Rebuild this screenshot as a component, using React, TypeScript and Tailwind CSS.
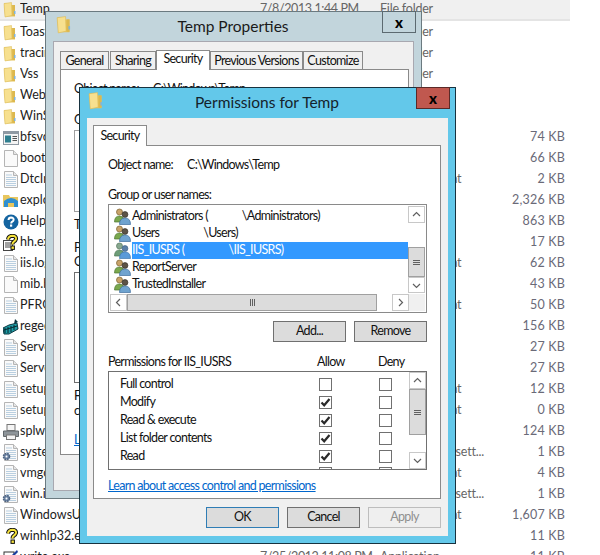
import React from 'react';

const FONT = "font-['Lato','Noto_Sans',sans-serif]";

type IconKind = 'folder' | 'exe' | 'blank' | 'text' | 'explorer' | 'help' | 'hh' | 'reg' | 'printer' | 'gear' | 'hlp' | 'write';

const FILES: { name: string; icon: IconKind; date?: string; type?: string; size?: string }[] = [
  { name: 'Temp', icon: 'folder', date: '7/8/2013 1:44 PM', type: 'File folder' },
  { name: 'Toast', icon: 'folder', type: 'File folder' },
  { name: 'tracing', icon: 'folder', type: 'File folder' },
  { name: 'Vss', icon: 'folder', type: 'File folder' },
  { name: 'Web', icon: 'folder' },
  { name: 'WinSxS', icon: 'folder' },
  { name: 'bfsvc.exe', icon: 'exe', size: '74 KB' },
  { name: 'bootstat', icon: 'blank', size: '66 KB' },
  { name: 'DtcInstall', icon: 'text', type: 'Text Document', size: '2 KB' },
  { name: 'explorer', icon: 'explorer', size: '2,326 KB' },
  { name: 'HelpPane', icon: 'help', size: '863 KB' },
  { name: 'hh.exe', icon: 'hh', size: '17 KB' },
  { name: 'iis.log', icon: 'text', type: 'Text Document', size: '62 KB' },
  { name: 'mib.bin', icon: 'blank', size: '43 KB' },
  { name: 'PFRO.log', icon: 'text', type: 'Text Document', size: '50 KB' },
  { name: 'regedit', icon: 'reg', size: '156 KB' },
  { name: 'ServerA', icon: 'text', size: '27 KB' },
  { name: 'ServerB', icon: 'text', size: '27 KB' },
  { name: 'setupact', icon: 'text', type: 'Text Document', size: '12 KB' },
  { name: 'setuperr', icon: 'text', type: 'Text Document', size: '0 KB' },
  { name: 'splwow64', icon: 'printer', size: '124 KB' },
  { name: 'system.ini', icon: 'gear', type: 'Configuration sett...', size: '1 KB' },
  { name: 'vmgcoinst', icon: 'text', type: 'Text Document', size: '4 KB' },
  { name: 'win.ini', icon: 'gear', type: 'Configuration sett...', size: '1 KB' },
  { name: 'WindowsUpdate', icon: 'text', type: 'Text Document', size: '1,607 KB' },
  { name: 'winhlp32.exe', icon: 'hlp', size: '11 KB' },
  { name: 'write.exe', icon: 'write', date: '7/25/2012 11:08 PM', type: 'Application', size: '11 KB' },
];

function FolderIcon({ size = 16 }: { size?: number }) {
  return (
    <svg width={size} height={size} viewBox="0 0 16 16">
      <path d="M1 1.5 L6 1 L6.5 3 L12 3 L12 14.5 L2 14.5 Z" fill="#e6c35c" />
      <path d="M1 1.5 L8.5 0.5 L9 13.5 L2 15 Z" fill="#f7e08f" stroke="#d9b64e" strokeWidth="0.5" />
      <rect x="9.5" y="3" width="2.5" height="11" fill="#dcb84f" />
      <rect x="11" y="9" width="1.5" height="3" fill="#7fb4dc" />
    </svg>
  );
}

function FileIcon({ lines }: { lines?: boolean }) {
  return (
    <svg width="16" height="17" viewBox="0 0 16 17">
      <path d="M1.5 0.5 H10.5 L14.5 4.5 V16.5 H1.5 Z" fill="#fafafa" stroke="#b5b5b5" />
      <path d="M10.5 0.5 V4.5 H14.5" fill="#e6e6e6" stroke="#b5b5b5" />
      {lines && (
        <path d="M3 4 H9 M3 6.5 H13 M3 8.5 H13 M3 10.5 H13 M3 12.5 H13 M3 14.5 H13" stroke="#b9cfe0" strokeWidth="1" />
      )}
    </svg>
  );
}

function ListIcon({ kind }: { kind: IconKind }) {
  switch (kind) {
    case 'folder':
      return <FolderIcon />;
    case 'text':
      return <FileIcon lines />;
    case 'blank':
      return <FileIcon />;
    case 'exe':
      return (
        <svg width="16" height="14" viewBox="0 0 16 14">
          <rect x="0.5" y="0.5" width="15" height="13" fill="#f4f4f4" stroke="#8f99a3" />
          <rect x="1" y="1" width="14" height="2" fill="#8f99a3" />
          <rect x="2" y="4.5" width="6" height="7" fill="#2f7f8f" />
          <path d="M9.5 5.5 H14 M9.5 7.5 H14 M9.5 9.5 H14" stroke="#555" />
        </svg>
      );
    case 'explorer':
      return (
        <svg width="16" height="16" viewBox="0 0 16 16">
          <path d="M0 2 H6 L7 4 H15 V14 H0 Z" fill="#e8c65e" />
          <path d="M1 8 Q8 2 15 8 V14 H11 V10 H5 V14 H1 Z" fill="#2f8fd0" />
        </svg>
      );
    case 'help':
      return (
        <svg width="16" height="16" viewBox="0 0 16 16">
          <circle cx="8" cy="8" r="7.5" fill="#1464a0" />
          <path d="M5.5 6 Q5.7 3.5 8 3.5 Q10.7 3.6 10.6 5.8 Q10.5 7 9 7.8 Q8.2 8.4 8.2 9.5" fill="none" stroke="#fff" strokeWidth="2" />
          <rect x="7" y="10.5" width="2.2" height="2.2" fill="#fff" />
        </svg>
      );
    case 'hh':
    case 'hlp':
      return (
        <svg width="16" height="17" viewBox="0 0 16 17">
          {kind === 'hh' && <rect x="0.5" y="6.5" width="9" height="10" fill="#fff" stroke="#444" />}
          {kind === 'hh' && <path d="M2 9 H8 M2 11 H8 M2 13 H8" stroke="#444" />}
          <path d="M5 5.5 Q5.5 1.8 9.5 1.8 Q13.5 2 13 5 Q12.5 7 10.5 8 Q9.5 8.7 9.5 10.5" fill="none" stroke="#111" strokeWidth="4" />
          <path d="M5 5.5 Q5.5 1.8 9.5 1.8 Q13.5 2 13 5 Q12.5 7 10.5 8 Q9.5 8.7 9.5 10.5" fill="none" stroke="#f5e23c" strokeWidth="2" />
          <rect x="8" y="12" width="3.4" height="3.4" fill="#f5e23c" stroke="#111" />
        </svg>
      );
    case 'reg':
      return (
        <svg width="16" height="16" viewBox="0 0 16 16">
          <path d="M0 9 L6 6 L14 4 L15 10 L6 15 L1 15 Z" fill="#1f9da6" stroke="#0b3640" />
          <path d="M2 9 V14 M5 8 V14 M8 7 V13 M11 6 V11 M1 11 L14 7" stroke="#06262e" />
          <path d="M12 0 L15 3 L11 5 Z" fill="#0b3640" />
        </svg>
      );
    case 'printer':
      return (
        <svg width="16" height="16" viewBox="0 0 16 16">
          <rect x="4" y="0.5" width="8" height="6" fill="#f4f4f4" stroke="#777" />
          <path d="M0.5 7 H15.5 V12.5 H0.5 Z" fill="#8e959a" stroke="#62686c" />
          <rect x="3.5" y="11" width="9" height="4.5" fill="#f4f4f4" stroke="#777" />
        </svg>
      );
    case 'gear':
      return (
        <span className="relative block w-4 h-[17px]">
          <FileIcon lines />
          <svg className="absolute left-[-1px] bottom-0" width="9" height="9" viewBox="0 0 9 9">
            <circle cx="4.5" cy="4.5" r="3" fill="#7088a8" stroke="#4e6380" strokeWidth="1.6" strokeDasharray="1.6 0.8" />
            <circle cx="4.5" cy="4.5" r="1" fill="#fff" />
          </svg>
        </span>
      );
    case 'write':
      return (
        <svg width="16" height="16" viewBox="0 0 16 16">
          <rect x="1" y="2" width="10" height="14" fill="#fff" stroke="#333" />
          <path d="M8 6 L14 0 L15 2 L10 7 Z" fill="#1b3fa0" />
        </svg>
      );
  }
}

function FileRow({ file, selected }: { file: (typeof FILES)[number]; selected: boolean }) {
  return (
    <div className={`h-[21px] w-[570px] shrink-0 flex items-center text-[12.5px] ${selected ? 'h-[20px] mb-[1px] bg-[#f0f0f0] border-b-2 border-[#e4e4e4]' : ''}`}>
      <span className="w-[20px] pl-[1px] flex justify-center shrink-0">
        <ListIcon kind={file.icon} />
      </span>
      <span className="w-[240px] text-[#1c1c1c] truncate">{file.name}</span>
      <span className="w-[120px] text-[#666] whitespace-nowrap tracking-[-0.4px]">{file.date ?? ''}</span>
      <span className="w-[125px] text-[#666] whitespace-nowrap tracking-[-0.2px]">{file.type ?? ''}</span>
      <span className="w-[60px] text-right text-[#6a6a78] tracking-[0.2px]">{file.size ?? ''}</span>
    </div>
  );
}

function UsersIcon({ muted }: { muted?: boolean }) {
  return (
    <svg width="17" height="17" viewBox="0 0 17 17" className="shrink-0">
      <circle cx="5.5" cy="4" r="3" fill={muted ? '#88a890' : '#c9a36a'} stroke={muted ? '#57785f' : '#7a6230'} strokeWidth="0.7" />
      <path d="M0.5 14 Q0.5 8 5.5 8 Q9.5 8 10 12 V14 Z" fill={muted ? '#6d9d78' : '#7aa84e'} stroke={muted ? '#507a58' : '#4d7530'} strokeWidth="0.7" />
      <circle cx="11" cy="6.5" r="2.9" fill={muted ? '#5a7fa8' : '#5c5346'} stroke={muted ? '#41648a' : '#3a342b'} strokeWidth="0.7" />
      <path d="M5.5 16.5 Q5.5 10 11 10 Q16.5 10 16.5 16.5 Z" fill={muted ? '#5a9ad8' : '#6fa3cf'} stroke={muted ? '#3f78b0' : '#3f6f9d'} strokeWidth="0.7" />
    </svg>
  );
}

function Chevron({ dir }: { dir: 'up' | 'down' | 'left' | 'right' }) {
  const d = {
    up: 'M2 7 L5.5 3.5 L9 7',
    down: 'M2 4 L5.5 7.5 L9 4',
    left: 'M7 2 L3.5 5.5 L7 9',
    right: 'M4 2 L7.5 5.5 L4 9',
  }[dir];
  return (
    <svg width="11" height="11" viewBox="0 0 11 11">
      <path d={d} fill="none" stroke="#606060" strokeWidth="1.2" />
    </svg>
  );
}

function ScrollButton({ dir, className = '' }: { dir: 'up' | 'down' | 'left' | 'right'; className?: string }) {
  return (
    <div className={`bg-white border border-[#c8c8c8] flex items-center justify-center shrink-0 ${className}`}>
      <Chevron dir={dir} />
    </div>
  );
}

function Grip({ vertical }: { vertical?: boolean }) {
  return vertical ? (
    <div className="flex flex-col gap-[1px]">
      <div className="w-[7px] h-[1px] bg-[#606060]" />
      <div className="w-[7px] h-[1px] bg-[#606060]" />
      <div className="w-[7px] h-[1px] bg-[#606060]" />
    </div>
  ) : (
    <div className="flex gap-[1px]">
      <div className="h-[7px] w-[1px] bg-[#606060]" />
      <div className="h-[7px] w-[1px] bg-[#606060]" />
      <div className="h-[7px] w-[1px] bg-[#606060]" />
    </div>
  );
}

function Win8Button({ label, disabled, primary, className = '' }: { label: string; disabled?: boolean; primary?: boolean; className?: string }) {
  const tone = disabled
    ? 'bg-[#efefef] border-[#bdbdbd] text-[#8f8f8f]'
    : primary
      ? 'bg-[#dcdcdc] border-[#2f7db5] text-[#111]'
      : 'bg-[#dcdcdc] border-[#707070] text-[#111]';
  return (
    <div className={`h-[21px] w-[73px] border flex items-center justify-center pb-[1px] ${tone} ${className}`}>
      {label}
    </div>
  );
}

function Check({ on }: { on?: boolean }) {
  return (
    <div className="w-[13px] h-[13px] border border-[#707070] bg-white flex items-center justify-center">
      {on && (
        <svg width="11" height="11" viewBox="0 0 11 11">
          <path d="M1.5 5.5 L4.2 8.3 L9.5 2" fill="none" stroke="#2a2a2a" strokeWidth="2.2" />
        </svg>
      )}
    </div>
  );
}

const USERS = [
  { label: <>Administrators (<span className="inline-block w-[34px]" />\Administrators)</> },
  { label: <>Users<span className="inline-block w-[44px]" />\Users)</> },
  { label: <>IIS_IUSRS (<span className="inline-block w-[44px]" />\IIS_IUSRS)</>, selected: true },
  { label: <>ReportServer</> },
  { label: <>TrustedInstaller</> },
];

const PERMISSIONS = [
  { name: 'Full control', allow: false },
  { name: 'Modify', allow: true },
  { name: 'Read & execute', allow: true },
  { name: 'List folder contents', allow: true },
  { name: 'Read', allow: true },
];

function TempProperties() {
  return (
    <div className="absolute left-[45px] top-[11px] w-[377px] h-[488px] bg-[#c2d5dc] border border-[#6b7a80] flex flex-col">
      <div className="h-[29px] shrink-0 relative flex items-center justify-center text-[15.5px] text-[#1a1a1a]">
        <span className="absolute left-[10px] top-[4px]"><FolderIcon size={18} /></span>
        <span className="ml-[-1px]">Temp Properties</span>
        <div className="absolute right-[5px] top-[-1px] w-[34px] h-[22px] border border-[#5c6a70] flex items-center justify-center text-[15px] font-black leading-none text-black">x</div>
      </div>
      <div className="mx-[7px] flex-1 mb-[7px] bg-[#f0f0f0] border border-[#a8a8b0] px-[6px] pt-[8px] flex flex-col text-[12.5px] tracking-[-0.7px]">
        <div className="flex items-end h-[19px] text-[#111] whitespace-nowrap">
          <div className="h-[18px] w-[49px] pt-[1px] bg-[#f0f0f0] border border-b-0 border-[#8a8a8a] flex items-center justify-center">General</div>
          <div className="h-[18px] w-[46px] pt-[1px] ml-[1px] bg-[#f0f0f0] border border-b-0 border-[#8a8a8a] flex items-center justify-center">Sharing</div>
          <div className="h-[20px] w-[54px] bg-white border border-b-0 border-[#8a8a8a] flex items-center justify-center pb-[2px] relative z-10 mb-[-1px]">Security</div>
          <div className="h-[18px] w-[93px] pt-[1px] bg-[#f0f0f0] border border-b-0 border-[#8a8a8a] flex items-center justify-center">Previous Versions</div>
          <div className="h-[18px] w-[60px] pt-[1px] bg-[#f0f0f0] border border-b-0 border-[#8a8a8a] flex items-center justify-center">Customize</div>
        </div>
        <div className="w-[349px] h-[386px] bg-white border border-[#8a8a8a] pl-[13px] pt-[10px] text-[#111] flex flex-col">
          <div className="flex"><span className="w-[79px]">Object name:</span><span>C:\Windows\Temp</span></div>
          <div className="mt-[12px]">Group</div>
          <div className="h-[82px] w-[20px] border border-[#a0a0a0]" />
          <div className="mt-[4px]">To</div>
          <div className="mt-[5px]">P</div>
          <div className="leading-[10px] mt-[-1px]">O</div>
          <div className="mt-[5px] h-[111px] w-[20px] border border-[#707070]" />
          <div className="mt-[4px]">F</div>
          <div className="leading-[10px]">c</div>
          <div className="mt-[15px] text-[#0066cc] underline">L</div>
        </div>
      </div>
    </div>
  );
}

function PermissionsDialog() {
  return (
    <div className="absolute left-[79px] top-[87px] w-[377px] h-[457px] bg-[#63c8ea] border border-[#17323f] flex flex-col">
      <div className="h-[30px] shrink-0 relative flex items-center justify-center text-[15.5px] text-[#14232c]">
        <span className="absolute left-[8px] top-[4px]"><FolderIcon size={18} /></span>
        <span className="ml-[-1px]">Permissions for Temp</span>
        <div className="absolute right-[5px] top-[-1px] w-[34px] h-[22px] bg-[#c0584f] border border-[#5a2a28] flex items-center justify-center text-[15px] font-black leading-none text-black">x</div>
      </div>
      <div className="mx-[7px] flex-1 mb-[7px] bg-[#f0f0f0] px-[6px] pt-[7px] flex flex-col text-[12.5px] tracking-[-0.7px]">
        <div className="h-[21px] w-[54px] bg-white border border-b-0 border-[#8a8a8a] flex items-center justify-center text-[#111] relative z-10 mb-[-1px] shrink-0">Security</div>
        <div className="w-[348px] h-[354px] bg-white border border-[#8a8a8a] px-[14px] pt-[10px] text-[#111] flex flex-col">
          <div className="h-[18px] flex items-center">
            <span className="w-[79px]">Object name:</span>
            <span>C:\Windows\Temp</span>
          </div>
          <div className="h-[18px] mt-[12px] flex items-center">Group or user names:</div>

          <div className="w-[319px] h-[109px] border border-[#8a8a8a] mt-[0px] flex flex-col p-[1px]">
            <div className="flex flex-1 min-h-0">
              <div className="flex-1 pt-[2px]">
                {USERS.map((u, i) => (
                  <div key={i} className="h-[17px] flex items-center pl-[4px]">
                    <UsersIcon muted={u.selected} />
                    <span className={`ml-[1px] h-[17px] pb-[1px] flex items-center flex-1 whitespace-nowrap ${u.selected ? 'bg-[#3399ff] text-white' : ''}`}>{u.label}</span>
                  </div>
                ))}
              </div>
              <div className="w-[17px] flex flex-col bg-white">
                <ScrollButton dir="up" className="h-[17px]" />
                <div className="h-[24px]" />
                <div className="h-[30px] bg-[#dcdcdc] border border-[#a0a0a0] flex items-center justify-center"><Grip vertical /></div>
                <ScrollButton dir="down" className="h-[16px]" />
              </div>
            </div>
            <div className="h-[17px] flex shrink-0">
              <ScrollButton dir="left" className="w-[17px]" />
              <div className="w-[250px] bg-[#dcdcdc] border border-[#a0a0a0] flex items-center justify-center"><Grip /></div>
              <div className="w-[15px]" />
              <ScrollButton dir="right" className="w-[17px]" />
              <div className="flex-1 bg-[#f0f0f0]" />
            </div>
          </div>

          <div className="flex justify-end gap-[8px] mt-[8px] w-[319px]">
            <Win8Button label="Add..." />
            <Win8Button label="Remove" />
          </div>

          <div className="h-[18px] mt-[11px] flex items-center w-[319px]">
            <span className="w-[209px]">Permissions for IIS_IUSRS</span>
            <span className="w-[61px]">Allow</span>
            <span>Deny</span>
          </div>
          <div className="w-[319px] h-[99px] border border-[#707070] flex overflow-hidden">
            <div className="flex-1 pl-[11px] pt-[3px]">
              {PERMISSIONS.map((p) => (
                <div key={p.name} className="h-[18px] flex items-center">
                  <span className="w-[199px]">{p.name}</span>
                  <Check on={p.allow} />
                  <span className="w-[47px]" />
                  <Check />
                </div>
              ))}
              <div className="h-[18px] flex items-start pt-[2px] pl-[199px]">
                <div className="w-[13px] h-[13px] border border-[#707070]" />
                <div className="w-[13px] h-[13px] border border-[#707070] ml-[47px]" />
              </div>
            </div>
            <div className="w-[17px] flex flex-col bg-white shrink-0">
              <ScrollButton dir="up" className="h-[17px]" />
              <div className="h-[46px] bg-[#dcdcdc] border border-[#a0a0a0] flex items-center justify-center"><Grip vertical /></div>
              <div className="flex-1" />
              <ScrollButton dir="down" className="h-[17px]" />
            </div>
          </div>

          <div className="h-[18px] mt-[7px] flex items-center text-[#0066cc] underline">Learn about access control and permissions</div>
        </div>
        <div className="flex justify-end gap-[8px] mt-[8px] pr-[0px] w-[348px]">
          <Win8Button label="OK" primary />
          <Win8Button label="Cancel" />
          <Win8Button label="Apply" disabled />
        </div>
      </div>
    </div>
  );
}

export default function App() {
  return (
    <div className={`relative w-[600px] h-[555px] bg-white overflow-hidden ${FONT}`}>
      <div className="flex flex-col">
        {FILES.map((f, i) => (
          <FileRow key={i} file={f} selected={i === 0} />
        ))}
      </div>
      <TempProperties />
      <PermissionsDialog />
    </div>
  );
}
